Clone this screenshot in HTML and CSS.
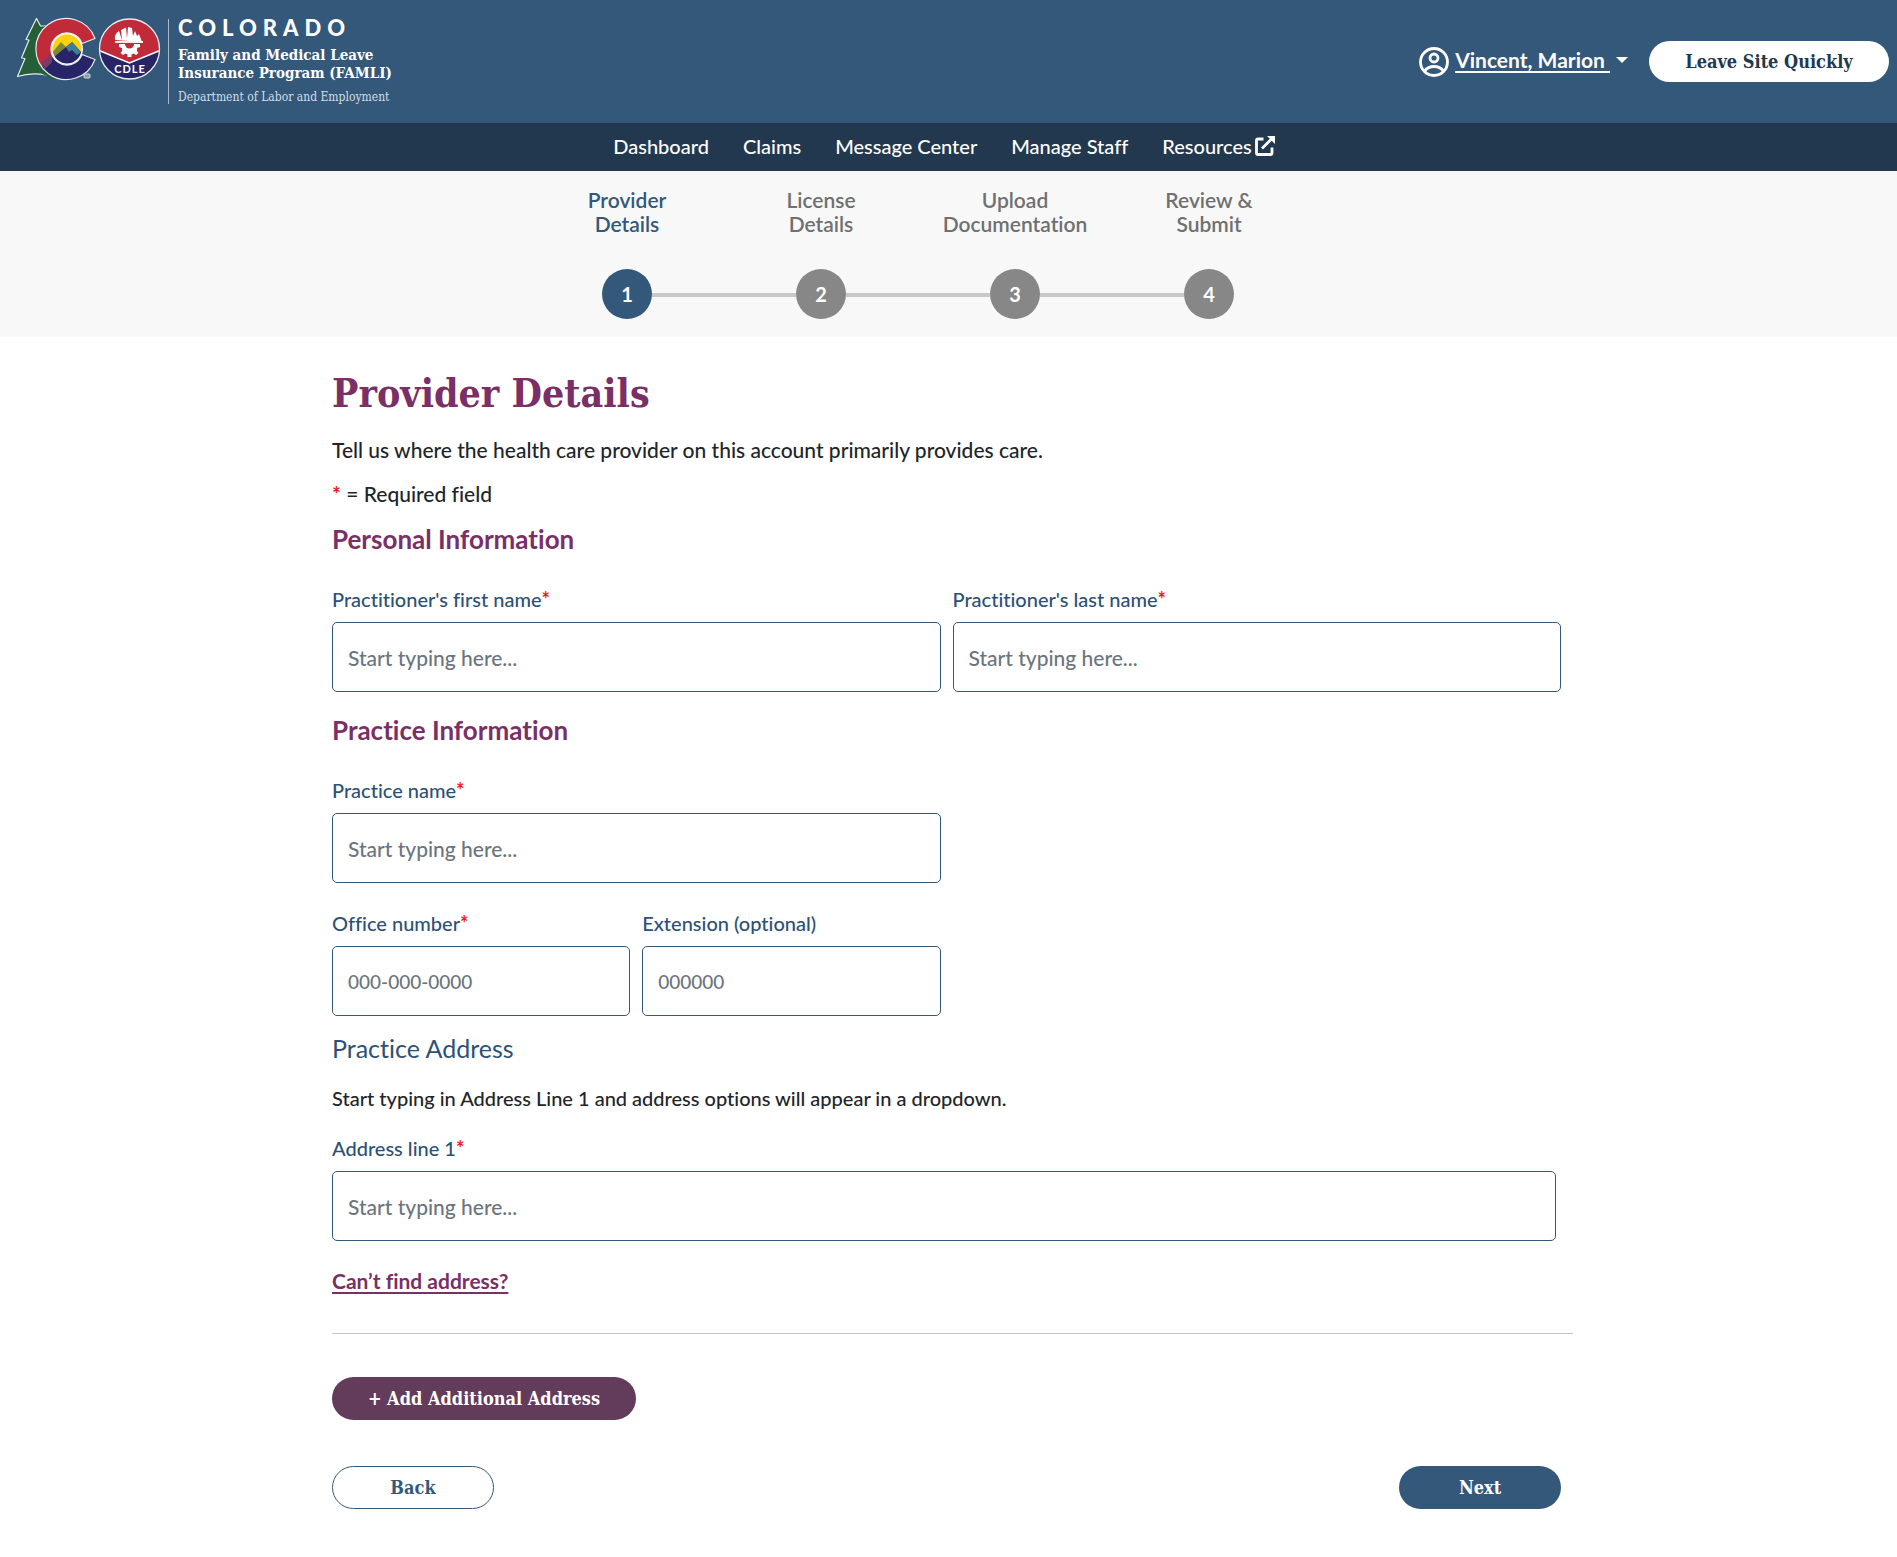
FILE: index.html
```html
<!DOCTYPE html>
<html lang="en">
<head>
<meta charset="utf-8">
<meta name="viewport" content="width=device-width, initial-scale=1">
<title>Provider Details - FAMLI</title>
<link rel="stylesheet" href="styles.css">
</head>
<body>
<header class="site-header">
  <a class="brand" href="#">
    <svg class="brand-mark" viewBox="16 16 146 66" role="img" aria-label="Colorado and CDLE emblems">
      <defs>
        <clipPath id="c-shape"><path d="M95 38.500A30.500 30.500 0 1 0 95 59.500L82 54.500A16 16 0 1 1 82 43.500Z"/></clipPath>
        <clipPath id="sun"><circle cx="67" cy="49" r="15"/></clipPath>
        <clipPath id="seal"><circle cx="129.500" cy="49" r="29.500"/></clipPath>
      </defs>
      <path d="M36.500 18.500L26 39.500l3 .5-7.500 18 3.500 .5L17.500 76.500Q36 70.500 58 78L62 26H40.500Z" fill="#245f38" stroke="#e6ecef" stroke-width="1.200" stroke-linejoin="round"/>
      <path d="M41 28L64 18V79H52Q46 75 42 74Z" fill="#245f38"/>
      <g clip-path="url(#c-shape)">
        <rect x="34" y="16" width="66" height="66" fill="#c12a38"/>
        <path d="M38 70l15-13 13 8 17-13h14v31H38z" fill="#272567"/>
        <path d="M41 63l11-10v9L45 69z" fill="#7b3b67"/>
      </g>
      <g clip-path="url(#sun)">
        <rect x="51" y="33" width="32" height="32" fill="#fdd20c"/>
        <path d="M50 55l11-13 6 6-10 10z" fill="#7d8a35"/>
        <path d="M54 57l18-15 11 12v12H54z" fill="#272567"/>
        <path d="M66 47l6-5 9 10-4 3-5-5-3 2z" fill="#3d7f98"/>
      </g>
      <circle cx="67" cy="49" r="15.200" fill="none" stroke="#fff" stroke-width="1.500"/>
      <path d="M95 38.500A30.500 30.500 0 1 0 95 59.500L82 54.500A16 16 0 1 1 82 43.500Z" fill="none" stroke="#e6ecef" stroke-width="1.200"/>
      <rect x="84" y="74" width="6" height="4" rx="1" fill="#8d97a0" stroke="#d5dce2"/>
      <g clip-path="url(#seal)">
        <rect x="99" y="18" width="61" height="62" fill="#c12a38"/>
        <path d="M98 50l31.500 13L161 50v32H98z" fill="#272567"/>
        <path d="M98 50l31.500 13L161 50" fill="none" stroke="#fff" stroke-width="1.500"/>
      </g>
      <circle cx="129.500" cy="49" r="30" fill="none" stroke="#e6ecef" stroke-width="1.300"/>
      <path d="M115 40q-1-6 4-9l3 9-1-10 5-2.500 1 11 1-11.500 4 1 1 8 2-5 2 5 2-2 3 8z" fill="#fff"/>
      <path d="M115 42h28" stroke="#fff" stroke-width="1.800"/>
      <path d="M119 44h21v3l-3 1v3l1.500 2-2.500 2-2.500-1.500-2 1V57h-4v-2.500l-2-1-2.500 1.500-2.500-2 1.500-2v-3l-3-1z" fill="#fff"/>
      <path d="M125 44a4.500 4.500 0 0 0 9 0z" fill="#c12a38"/>
      <text class="seal-text" x="130" y="73" text-anchor="middle">CDLE</text>
    </svg>
    <span class="brand-copy">
      <span class="brand-state">COLORADO</span>
      <span class="brand-program">Family and Medical Leave<br>Insurance Program (FAMLI)</span>
      <span class="brand-dept">Department of Labor and Employment</span>
    </span>
  </a>
  <div class="account">
    <svg class="account-icon" viewBox="0 0 30 30" fill="none" stroke="#fff" stroke-width="2.800" aria-hidden="true">
      <circle cx="15" cy="15" r="13.500"/><circle cx="15" cy="11" r="4"/>
      <path d="M5.500 24Q9 19.500 15 19.500T24.500 24"/>
    </svg>
    <a class="account-name" href="#"><span class="account-label">Vincent, Marion&nbsp;</span><span class="caret"></span></a>
    <button class="btn btn-leave" type="button">Leave Site Quickly</button>
  </div>
</header>
<nav class="main-nav" aria-label="Main">
  <a href="#">Dashboard</a>
  <a href="#">Claims</a>
  <a href="#">Message Center</a>
  <a href="#">Manage Staff</a>
  <a href="#">Resources<svg class="external" viewBox="0 0 22 22" fill="none" stroke="#fff" stroke-width="2.800" aria-hidden="true"><path d="M9.500 4H4Q2.500 4 2.500 5.500V18Q2.500 19.500 4 19.500H16.500Q18 19.500 18 18V12.500M8 13.500L18.500 3"/><path d="M13 1h8v8z" fill="#fff" stroke="none"/></svg></a>
</nav>
<div class="progress">
  <ol class="steps">
    <li class="step current" aria-current="step"><span class="step-label">Provider<br>Details</span><span class="step-dot">1</span></li>
    <li class="step"><span class="step-label">License<br>Details</span><span class="step-dot">2</span></li>
    <li class="step"><span class="step-label">Upload<br>Documentation</span><span class="step-dot">3</span></li>
    <li class="step"><span class="step-label">Review &amp;<br>Submit</span><span class="step-dot">4</span></li>
  </ol>
</div>
<main class="content">
  <h1>Provider Details</h1>
  <p class="intro">Tell us where the health care provider on this account primarily provides care.</p>
  <p class="required-note"><span class="req">*</span> = Required field</p>
  <form>
    <h2>Personal Information</h2>
    <div class="fields">
      <div class="field"><label for="first">Practitioner's first name<span class="req">*</span></label><input id="first" type="text" placeholder="Start typing here..."></div>
      <div class="field"><label for="last">Practitioner's last name<span class="req">*</span></label><input id="last" type="text" placeholder="Start typing here..."></div>
    </div>
    <h2>Practice Information</h2>
    <div class="fields">
      <div class="field"><label for="practice">Practice name<span class="req">*</span></label><input id="practice" type="text" placeholder="Start typing here..."></div>
    </div>
    <div class="fields phone">
      <div class="field small"><label for="office">Office number<span class="req">*</span></label><input id="office" class="numeric" type="tel" placeholder="000-000-0000"></div>
      <div class="field small"><label for="ext">Extension (optional)</label><input id="ext" class="numeric" type="text" placeholder="000000"></div>
    </div>
    <h3>Practice Address</h3>
    <p class="hint">Start typing in Address Line 1 and address options will appear in a dropdown.</p>
    <div class="field address"><label for="line1">Address line 1<span class="req">*</span></label><input id="line1" type="text" placeholder="Start typing here..."></div>
    <a class="find-link" href="#">Can’t find address?</a>
    <hr>
    <button class="btn btn-add" type="button">+ Add Additional Address</button>
    <div class="actions">
      <button class="btn btn-back" type="button">Back</button>
      <button class="btn btn-next" type="submit">Next</button>
    </div>
  </form>
</main>
</body>
</html>
```
FILE: styles.css
```css
:root {
  --blue: #34587a;
  --navy: #22384f;
  --plum: #7a2f66;
  --sans: Lato, "Open Sans", sans-serif;
  --slab: "DejaVu Serif Condensed", "DejaVu Serif", serif;
}

* { box-sizing: border-box; }

body {
  margin: 0;
  background: #fff;
  color: #212529;
  font: 500 21px/30px var(--sans);
  font-variant-ligatures: no-common-ligatures;
}

/* Header */
.site-header {
  display: flex;
  justify-content: space-between;
  align-items: flex-start;
  min-height: 123px;
  padding: 16px 8px 16px 16px;
  background: var(--blue);
}

.brand {
  display: flex;
  gap: 6px;
  color: #fff;
  text-decoration: none;
}

.brand-mark { width: 146px; height: 66px; }
.seal-text { font: 700 11px var(--sans); fill: #fff; letter-spacing: 1px; }

.brand-copy {
  display: flex;
  flex-direction: column;
  margin-top: 3px;
  padding-left: 9px;
  border-left: 1px solid #a9bac8;
}

.brand-state { font: 900 22px/18px var(--sans); letter-spacing: 6px; }
.brand-program { margin-top: 9px; font: 700 15px/18px var(--slab); }
.brand-dept { margin-top: 8px; font: 12px/14px var(--slab); color: #d3dde6; }

.account {
  display: flex;
  align-items: center;
  gap: 6px;
  margin-top: 25px;
}

.account-icon { width: 30px; height: 30px; }

.account-name {
  display: flex;
  align-items: center;
  gap: 6px;
  padding-bottom: 4px;
  color: #fff;
  font-weight: 700;
  text-decoration: none;
}

.account-label {
  text-decoration: underline;
  text-decoration-thickness: 2px;
  text-underline-offset: 3px;
}

.caret {
  border: 6px solid transparent;
  border-top-color: #fff;
  border-bottom: 0;
}

.btn {
  height: 43px;
  border: 1px solid transparent;
  border-radius: 22px;
  background: var(--blue);
  color: #fff;
  font: 700 18px/24px var(--slab);
  cursor: pointer;
}

.btn-leave { width: 240px; height: 41px; margin-left: 15px; background: #fff; color: var(--navy); }

/* Navigation */
.main-nav {
  display: flex;
  justify-content: center;
  align-items: center;
  gap: 34px;
  min-height: 48px;
  padding: 0 8px 2px 0;
  background: var(--navy);
  font-size: 20px;
}

.main-nav a { display: flex; align-items: center; gap: 2px; color: #fff; text-decoration: none; }
.external { width: 22px; height: 22px; }

/* Progress */
.progress { padding: 17px 61px 18px 0; background: #f8f8f8; }

.steps {
  display: flex;
  justify-content: center;
  margin: 0;
  padding: 0;
  list-style: none;
}

.step {
  display: flex;
  flex-direction: column;
  align-items: center;
  gap: 33px;
  width: 194px;
  color: #6f7071;
  font-weight: 600;
  line-height: 24px;
  text-align: center;
}

.step-dot {
  display: grid;
  place-items: center;
  position: relative;
  width: 50px;
  height: 50px;
  border-radius: 50%;
  background: #868786;
  color: #fff;
  font-size: 20px;
  font-weight: 700;
}

.step + .step .step-dot::before {
  content: "";
  position: absolute;
  top: 24px;
  right: 50px;
  width: 144px;
  height: 4px;
  background: #c5c9ca;
}

.current { color: var(--blue); }
.current .step-dot { background: var(--blue); }

/* Form */
.content {
  max-width: 1265px;
  margin: 0 auto;
  padding: 32px 8px 48px 16px;
}

h1 { margin: 0; color: var(--plum); font: 700 39px/48px var(--slab); }
.intro { margin: 18px 0 14px; }
.required-note { margin: 0; }
.req { color: #f01818; font-weight: 700; }

h2 { margin: 15px 0 30px; color: var(--plum); font-size: 26px; font-weight: 700; line-height: 30px; }
.fields + h2 { margin-top: 23px; }

.fields { display: flex; gap: 12px; padding-right: 12px; }
.fields.phone { margin-top: 25px; }
.field { flex: 0 0 calc(50% - 6px); }
.field.small { flex-basis: calc(25% - 9px); }

label { display: block; margin-bottom: 8px; color: #2d5175; font-size: 20px; }

input {
  display: block;
  width: 100%;
  height: 70px;
  padding: 0 15px;
  border: 1px solid var(--blue);
  border-radius: 5px;
  background: #fff;
  color: #212529;
  font: 500 21px/30px var(--sans);
}

.numeric { font-size: 19px; }

input::placeholder { color: #6c757d; opacity: 1; }

h3 { margin: 17px 0 20px; color: #2d5175; font-size: 25px; font-weight: 400; line-height: 30px; }
.hint { margin: 0 0 20px; font-size: 20px; }
.address { margin-right: 17px; }

.find-link {
  display: inline-block;
  margin-top: 25px;
  color: var(--plum);
  font-weight: 700;
  text-decoration-thickness: 2px;
  text-underline-offset: 3px;
}

hr { margin: 37px 0 43px; border: 0; border-top: 1px solid #c4c6c7; }

.btn-add { display: block; width: 304px; background: #643c5b; }
.actions { display: flex; justify-content: space-between; margin-top: 46px; padding-right: 12px; }
.btn-back, .btn-next { width: 162px; }
.btn-back { border-color: var(--blue); background: #fff; color: var(--blue); }
```
